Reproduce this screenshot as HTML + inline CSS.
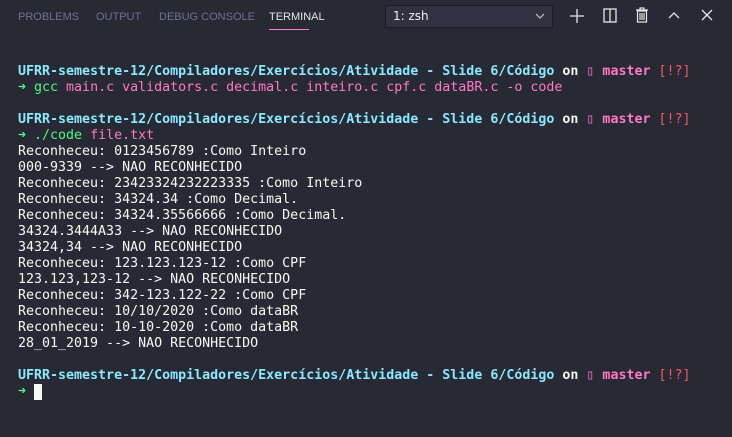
<!DOCTYPE html>
<html><head><meta charset="utf-8"><style>
html,body{margin:0;padding:0;width:732px;height:437px;background:#272935;overflow:hidden}
.tabs{position:absolute;top:0;left:0;right:0;height:36px;font-family:"Liberation Sans","DejaVu Sans",sans-serif;font-size:11px}
.tab{position:absolute;top:11px;color:#6d7394}
.tab.act{color:#e6e6ea}
.ul{position:absolute;left:192px;top:29px;width:39px;height:1px;background:#ff79c6}
.dd{position:absolute;left:275px;top:5px;width:119px;height:23px;background:#303241;border:1px solid #1c1d26;box-sizing:border-box;color:#f0f0f0;font-family:"DejaVu Sans",sans-serif;font-size:12px;line-height:21px;padding-left:7px}
svg{position:absolute}
pre{position:absolute;left:18px;top:64px;margin:0;font-family:"DejaVu Sans Mono",monospace;font-size:13.3px;line-height:16px;color:#f8f8f2}
.c{color:#8be9fd;font-weight:bold}.w{color:#f8f8f2;font-weight:bold}.p{color:#ff79c6;font-weight:bold}.r{color:#ff5555}
.g{color:#50fa7b}.m{color:#ff79c6}
.cur{display:inline-block;width:8px;height:16px;background:#f8f8f2;vertical-align:top}
</style></head><body>
<div class="tabs">
<span class="tab" style="left:18px">PROBLEMS</span>
<span class="tab" style="left:96px">OUTPUT</span>
<span class="tab" style="left:159px">DEBUG CONSOLE</span>
<span class="tab act" style="left:269px">TERMINAL</span>
<div class="ul" style="left:269px;width:40px"></div>
</div>
<div class="dd" style="left:385px;width:168px">1: zsh</div>
<svg style="left:535px;top:12px" width="10" height="8" viewBox="0 0 10 8"><path d="M1 2l4 4 4-4" stroke="#c0c0c0" fill="none" stroke-width="1.2"/></svg>
<svg style="left:569px;top:8px" width="16" height="16"><path d="M8 1v14M1 8h14" stroke="#e6e6e6" stroke-width="1.3"/></svg>
<svg style="left:603px;top:8px" width="14" height="16"><rect x="1" y="1" width="12" height="13" stroke="#e6e6e6" fill="none" stroke-width="1.3"/><path d="M7 1v13" stroke="#e6e6e6" stroke-width="1.3"/></svg>
<svg style="left:635px;top:7px" width="14" height="17"><path d="M1 3h12M5 3V1h4v2M2.5 4h9v11h-9z M5 6v7M7 6v7M9 6v7" stroke="#e6e6e6" fill="none" stroke-width="1.2"/></svg>
<svg style="left:668px;top:11px" width="12" height="8"><path d="M1 7l5-5 5 5" stroke="#e6e6e6" fill="none" stroke-width="1.3"/></svg>
<svg style="left:701px;top:9px" width="12" height="12"><path d="M1 1l10 10M11 1L1 11" stroke="#e6e6e6" stroke-width="1.3"/></svg>
<pre><span class="c">UFRR-semestre-12/Compiladores/Exercícios/Atividade - Slide 6/Código</span> <span class="w">on</span> <span class="p">▯ master</span> <span class="r">[!?]</span>
<span class="g">➜ gcc</span> <span class="m">main.c validators.c decimal.c inteiro.c cpf.c dataBR.c -o code</span>

<span class="c">UFRR-semestre-12/Compiladores/Exercícios/Atividade - Slide 6/Código</span> <span class="w">on</span> <span class="p">▯ master</span> <span class="r">[!?]</span>
<span class="g">➜ ./code</span> <span class="m">file.txt</span>
Reconheceu: 0123456789 :Como Inteiro
000-9339 --&gt; NAO RECONHECIDO
Reconheceu: 23423324232223335 :Como Inteiro
Reconheceu: 34324.34 :Como Decimal.
Reconheceu: 34324.35566666 :Como Decimal.
34324.3444A33 --&gt; NAO RECONHECIDO
34324,34 --&gt; NAO RECONHECIDO
Reconheceu: 123.123.123-12 :Como CPF
123.123,123-12 --&gt; NAO RECONHECIDO
Reconheceu: 342-123.122-22 :Como CPF
Reconheceu: 10/10/2020 :Como dataBR
Reconheceu: 10-10-2020 :Como dataBR
28_01_2019 --&gt; NAO RECONHECIDO

<span class="c">UFRR-semestre-12/Compiladores/Exercícios/Atividade - Slide 6/Código</span> <span class="w">on</span> <span class="p">▯ master</span> <span class="r">[!?]</span>
<span class="g">➜</span> <span class="cur"></span></pre>
</body></html>
